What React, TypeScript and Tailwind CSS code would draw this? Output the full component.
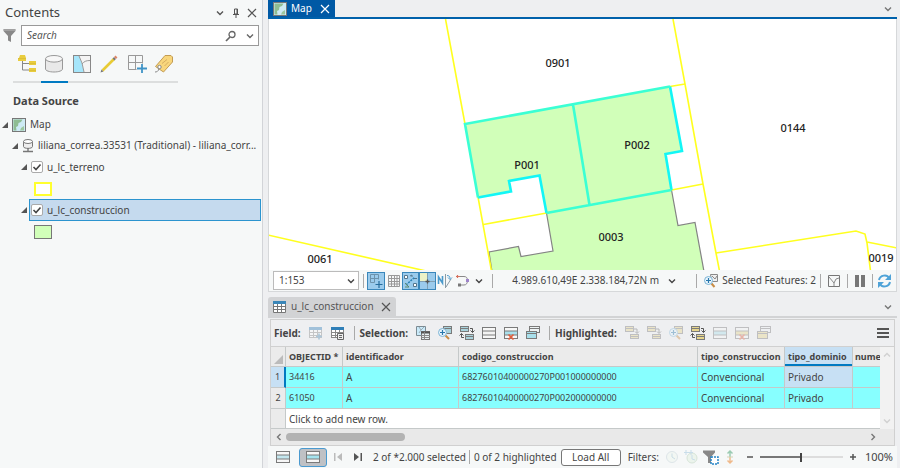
import type { ReactNode } from "react"
import clsx from "clsx"

interface IconProps {
  children: ReactNode
  w?: number
  h?: number
  faded?: boolean
}

function Icon({ children, w = 16, h = 16, faded }: IconProps) {
  return (
    <svg
      width={w}
      height={h}
      viewBox={`0 0 ${w} ${h}`}
      fill="none"
      aria-hidden="true"
      className={clsx("block shrink-0", faded && "opacity-40")}
    >
      {children}
    </svg>
  )
}

function Chevron({ dir = "down" }: { dir?: "down" | "up" | "left" | "right" }) {
  const d = {
    down: "M2 3.500 5 6.500 8 3.500",
    up: "M2 6.500 5 3.500 8 6.500",
    left: "M6.500 2 3.500 5 6.500 8",
    right: "M3.500 2 6.500 5 3.500 8",
  }[dir]
  return (
    <Icon w={10} h={10}>
      <path d={d} stroke="currentColor" strokeWidth="1.400" />
    </Icon>
  )
}

function Close() {
  return (
    <Icon w={10} h={10}>
      <path d="m1 1 8 8M9 1 1 9" stroke="currentColor" strokeWidth="1.200" />
    </Icon>
  )
}

function Divider() {
  return <span className="block h-[14px] w-px shrink-0 bg-[#a9a9a9]" />
}

// little table of rows used by most of the attribute table buttons
function Rows({ x, y, w = 10, h = 7, fill = "#a9d3dc" }: { x: number; y: number; w?: number; h?: number; fill?: string }) {
  return (
    <g>
      <rect x={x + 0.5} y={y + 0.5} width={w - 1} height={h - 1} fill={fill} stroke="#7a7a7a" />
      <path d={`M${x} ${y + 2.5}h${w}`} stroke="#7a7a7a" />
    </g>
  )
}

function FieldIcon({ op, faded }: { op: "add" | "calc"; faded?: boolean }) {
  return (
    <Icon faded={faded}>
      <rect x="1.500" y="2.500" width="12" height="10" fill="#fff" stroke="#888" />
      <rect x="1" y="2" width="13" height="3" fill="#2f7fb8" />
      <path d="M1 7.500h13M1 10.500h13M5.500 5v8M9.500 5v8" stroke="#888" />
      {op === "add" ? (
        <path d="M8 11.500h6M11 8.500v6" stroke="#4a8bb5" strokeWidth="1.600" />
      ) : (
        <path d="M7.500 8.500h6v6h-6zM9 10.500h3M9 12.500h3" fill="#eee" stroke="#666" />
      )}
    </Icon>
  )
}

function ByAttributes() {
  return (
    <Icon>
      <path d="M1.500 1.500h9v5h-4v4h-5z" fill="#c9eafa" stroke="#7c8b93" />
      <path d="m4 2 2 3-2 3M6 5l3-3" stroke="#9aabb3" />
      <rect x="6.500" y="6.500" width="8" height="8" fill="#e8f0f2" stroke="#777" />
      <path d="M6 7.500h9" stroke="#555" strokeWidth="2" />
      <path d="M6 10.500h9M6 12.500h9M9.500 7v8" stroke="#888" />
    </Icon>
  )
}

function ZoomRows({ faded, fill }: { faded?: boolean; fill?: string }) {
  return (
    <Icon faded={faded}>
      <Rows x={6} y={1} w={9} h={8} fill={fill} />
      <path d="m8.500 10.500 3.500 3.500" stroke="#c98d45" strokeWidth="2" />
      <circle cx="5.500" cy="7.500" r="4" fill="#e9f5fc" stroke="#7cb4d6" />
      <path d="M3 7.500h5M5.500 5v5" stroke="#2878ad" strokeWidth="1.200" />
    </Icon>
  )
}

function SwitchRows({ faded, fill }: { faded?: boolean; fill?: string }) {
  return (
    <Icon faded={faded}>
      <Rows x={1} y={1} w={9} h={6} fill={fill} />
      <Rows x={6} y={9} w={9} h={6} fill={fill} />
      <path d="M11 3.500h2.500v4M11.500 5.500l2 2 2-2M5 12.500H2.500v-4M.5 10.500l2-2 2 2" stroke="#555" />
    </Icon>
  )
}

function MoveRows({ fill }: { fill?: string }) {
  return (
    <Icon faded>
      <Rows x={1} y={1} w={9} h={6} fill={fill} />
      <Rows x={6} y={9} w={9} h={5} fill={fill} />
      <path d="M10 4h3v4M11 6.500l2 2 2-2" stroke="#666" />
    </Icon>
  )
}

function ListRows({ faded, clear, fill = "#f3f3f3" }: { faded?: boolean; clear?: boolean; fill?: string }) {
  return (
    <Icon faded={faded}>
      <rect x="1.500" y="2.500" width="13" height="11" fill="#f7f7f7" stroke="#7a7a7a" />
      <path d="M2 6h12v4H2z" fill={fill} />
      <path d="M1 6h14M1 10h14" stroke="#7a7a7a" />
      {clear && <path d="m5.500 9.500 5 5M10.500 9.500l-5 5" stroke="#e0603f" strokeWidth="1.600" />}
    </Icon>
  )
}

function StackRows({ faded, fill = "#a9e0ec" }: { faded?: boolean; fill?: string }) {
  return (
    <Icon faded={faded}>
      <Rows x={4} y={1} w={11} h={7} fill="#eef3f4" />
      <Rows x={1} y={6} w={11} h={8} fill={fill} />
    </Icon>
  )
}

function MapIcon() {
  return (
    <Icon w={14} h={14}>
      <rect x=".5" y=".5" width="13" height="13" fill="#cdeaf4" stroke="#777" />
      <path d="M1.500 1.500h9L9 4 6.500 5 6 8l-2 1 .5 3.500h-3z" fill="#8fbd92" />
      <path d="m9 10 3-2v4.500H8z" fill="#9cc79f" />
    </Icon>
  )
}

const contentTabs: { name: string; icon: ReactNode }[] = [
  {
    name: "List By Drawing Order",
    icon: (
      <Icon w={20} h={20}>
        <path d="M5.500 6v10H13M5.500 9.500H13" stroke="#888" />
        <path d="M3 1h5l1 3v3H1V4h1zM12 7h7v4h-7zM12 14h7v4h-7z" fill="#e9cd3f" />
        <path d="M1 4.500h8M12 9.500h7M12 16.500h7" stroke="#dcc038" />
      </Icon>
    ),
  },
  {
    name: "List By Data Source",
    icon: (
      <Icon w={20} h={20}>
        <path d="M1.500 5v10c0 1.700 3.800 3 8.500 3s8.500-1.300 8.500-3V5" fill="#e9e9e9" stroke="#999" />
        <ellipse cx="10" cy="4.800" rx="8.500" ry="3.300" fill="#f7f7f7" stroke="#999" />
      </Icon>
    ),
  },
  {
    name: "List By Selection",
    icon: (
      <Icon w={20} h={20}>
        <rect x="1.500" y="1.500" width="17" height="17" fill="#f4f4f4" stroke="#888" />
        <path d="M2 2h5l3 8 2 8H2z" fill="#a6e6fb" />
        <path d="m7 2 3 7 2 9M18 6.500c-4 0-6 1-8 3.500" stroke="#999" />
      </Icon>
    ),
  },
  {
    name: "List By Editing",
    icon: (
      <Icon w={20} h={20}>
        <path d="M3.500 16.500 15 5" stroke="#e8cb35" strokeWidth="2.600" />
        <path d="m14.500 5.500 1.500-1.500" stroke="#777" strokeWidth="2.600" />
        <path d="m16 4 1.500-1.500" stroke="#dd8568" strokeWidth="2.600" />
        <path d="m1.500 18.500 1-3 2 2z" fill="#777" />
      </Icon>
    ),
  },
  {
    name: "List By Snapping",
    icon: (
      <Icon w={20} h={20}>
        <path d="M1.500 1.500h14v8M1.500 1.500v14h8M8.500 1.500v14M1.500 8.500h14" stroke="#999" />
        <path d="M15 10v9M10 14.500h10" stroke="#3f93c6" strokeWidth="1.800" />
      </Icon>
    ),
  },
  {
    name: "List By Labeling",
    icon: (
      <Icon w={20} h={20}>
        <path d="M11 1.500h6L18.500 3v5l-9 10-8-5.500z" fill="#f8d67c" stroke="#c39c55" />
        <circle cx="5.500" cy="13" r="1.700" fill="#fff" stroke="#888" />
        <path d="m8 9.500 5-4M10.500 12l4-4" stroke="#d6ae62" />
        <path d="M5 14.500c-.5 3-2.500 3.500-4 3.500" stroke="#888" />
      </Icon>
    ),
  },
]

function Twisty() {
  return (
    <button aria-label="Collapse" className="shrink-0 text-[#555]">
      <svg width="6" height="6" viewBox="0 0 6 6" className="block">
        <path d="M6 0v6H0z" fill="currentColor" />
      </svg>
    </button>
  )
}

function LayerCheck({ name }: { name: string }) {
  return (
    <label className="flex flex-1 items-center gap-1">
      <span className="grid">
        <input
          type="checkbox"
          defaultChecked
          className="peer col-start-1 row-start-1 h-3 w-3 appearance-none rounded-[2px] border border-[#aaa] bg-white"
        />
        <svg
          viewBox="0 0 12 12"
          className="pointer-events-none invisible col-start-1 row-start-1 h-3 w-3 peer-checked:visible"
        >
          <path d="m2.500 6 2.500 2.500L9.500 3.500" fill="none" stroke="#444" strokeWidth="1.600" />
        </svg>
      </span>
      {name}
    </label>
  )
}

function Contents() {
  return (
    <aside className="w-[263px] shrink-0 border-r border-[#d2d4d8] bg-[#f6f8f8]">
      <header className="flex h-[25px] items-center pr-[5px] pl-[5px] text-[#555]">
        <h1 className="flex-1 text-[13px] text-[#444]">Contents</h1>
        <div className="flex items-center gap-[6px]">
          <button aria-label="Options"><Chevron /></button>
          <button aria-label="Auto hide">
            <Icon w={10} h={10}>
              <path d="M3.500 1h3v5h-3zM6 1v5M2 6.500h6M5 6.500V10" stroke="currentColor" />
            </Icon>
          </button>
          <button aria-label="Close"><Close /></button>
        </div>
      </header>

      <div className="flex items-center gap-[5px] pr-[3px] pl-[3px]">
        <Icon w={13} h={15}>
          <path d="M.5 1h12v2L8 8v6l-3-1.500V8L.5 3z" fill="#888" />
          <path d="M1 2h11" stroke="#bbb" />
        </Icon>
        <div className="flex h-[21px] flex-1 items-center border border-[#999] bg-white pr-[3px] pl-[5px] text-[#666]">
          <input
            type="text"
            placeholder="Search"
            aria-label="Search"
            className="min-w-0 flex-1 bg-transparent text-[10px] italic outline-none placeholder:text-[#555]"
          />
          <button aria-label="Find" className="mr-2">
            <Icon w={12} h={12}>
              <circle cx="7" cy="4.500" r="3" stroke="currentColor" strokeWidth="1.300" />
              <path d="m5 7-4 4" stroke="currentColor" strokeWidth="1.700" />
            </Icon>
          </button>
          <button aria-label="Search options"><Chevron /></button>
        </div>
      </div>

      <nav className="mt-2 ml-[13px] flex w-[165px]">
        {contentTabs.map((tab, i) => (
          <button
            key={tab.name}
            aria-label={tab.name}
            className={clsx(
              "flex h-[29px] flex-1 items-start justify-center border-b-2",
              i === 1 ? "border-[#007ac2]" : "border-[#dcdede]",
            )}
          >
            {tab.icon}
          </button>
        ))}
      </nav>

      <h2 className="mt-2 ml-[13px] h-[23px] text-[11px] leading-5 font-bold text-[#444]">Data Source</h2>

      <ul className="text-[10px] text-[#444]">
        <li className="flex h-[21px] items-center gap-1 pl-[2px]">
          <Twisty />
          <MapIcon />
          <span>Map</span>
        </li>
        <li className="flex h-[21px] items-center gap-1 pl-3">
          <Twisty />
          <Icon w={12} h={14}>
            <path d="M1.500 2.500v5c0 2.500 9 2.500 9 0v-5" fill="#eee" stroke="#777" />
            <ellipse cx="6" cy="2.500" rx="4.500" ry="2" fill="#fff" stroke="#777" />
            <path d="M6 9v3M1 12.500h10" stroke="#777" strokeWidth="1.400" />
          </Icon>
          <span className="whitespace-nowrap">liliana_correa.33531 (Traditional) - liliana_corr...</span>
        </li>
        <li className="flex h-[22px] items-center gap-1 pl-[21px]">
          <Twisty />
          <LayerCheck name="u_lc_terreno" />
        </li>
        <li className="flex h-[21px] items-center pl-[34px]">
          <span className="h-[14px] w-[18px] border-2 border-[#ffff2e] bg-white" />
        </li>
        <li className="flex h-[22px] items-center pr-px pl-[21px]">
          <Twisty />
          <div className="ml-[2px] flex h-full flex-1 items-center border border-[#2b94cf] bg-[#c5daee] pl-px">
            <LayerCheck name="u_lc_construccion" />
          </div>
        </li>
        <li className="flex h-[22px] items-center pl-[34px]">
          <span className="h-[14px] w-[18px] border border-[#777] bg-[#d1ffb9]" />
        </li>
      </ul>
    </aside>
  )
}

const parcels = [
  { code: "0901", x: 558, y: 67 },
  { code: "P001", x: 527, y: 169 },
  { code: "P002", x: 637, y: 149 },
  { code: "0144", x: 793, y: 132 },
  { code: "0003", x: 611, y: 241 },
  { code: "0061", x: 320, y: 263 },
  { code: "0019", x: 881, y: 262 },
]

function MapView() {
  return (
    <svg
      viewBox="269 19 627 251"
      preserveAspectRatio="xMidYMid slice"
      className="min-h-[160px] w-full flex-1 border-x border-[#d6d8da] bg-white"
      role="img"
      aria-label="Parcel map"
    >
      <path
        d="M546.500 213 671.500 190l6.500 35.500 17-3 9 49H492l-3-19.500 29.500-5.500 2.500 10 32-5.500z"
        fill="#d1ffb9"
        stroke="#848484"
        strokeWidth="1.200"
      />
      <path d="m465 124 205-37.500 12 64.500-16.500 3 6 36-125 23-7-37.500-30.500 5.500 2 10.500-33 6z" fill="#d1ffb9" />
      <g fill="none" stroke="#ffff1f" strokeWidth="1.600">
        <path d="M445.500 19 465 124M478 197l13.500 74M483.500 224.500l63-11.500" />
        <path d="M673 19 685 84l18 100 13 69 3.500 18M670 86.500l15-2.500M671.500 190l31.500-6" />
        <path d="m716 253 140-22 9 3 2 9 3.500 28M867 242l30 6M268 235l158 36" />
      </g>
      <g fill="none" strokeWidth="2.600">
        <path d="m478 197.500 33-6-2-10.500 30.500-5.500 7 37.500M670 86.500l12 64.500-16.500 3 6 36" stroke="#12f6f6" />
        <path d="m478 197.500-13-73.500 205-37.500M573 104.500l16.500 100.500M546.500 213l125-23" stroke="#3bffd4" />
      </g>
      <g fontSize="11" fontWeight="500" fill="#222" textAnchor="middle">
        {parcels.map(p => (
          <text key={p.code} x={p.x} y={p.y}>{p.code}</text>
        ))}
      </g>
    </svg>
  )
}

const active = "border border-[#3a87bb] bg-[#9bcbec]"

function MapStatus() {
  return (
    <div className="flex h-[22px] shrink-0 items-center border-x border-b border-[#d6d8da] bg-[#f6f8f8] pr-1 pl-1 text-[10px] text-[#444]">
      <div className="grid h-[19px] w-[86px] items-center border border-[#bbb] bg-white">
        <select aria-label="Map scale" className="col-start-1 row-start-1 h-full appearance-none bg-transparent pl-[5px]">
          <option>1:153</option>
        </select>
        <span className="pointer-events-none col-start-1 row-start-1 mr-[2px] justify-self-end"><Chevron /></span>
      </div>
      <div className="ml-1 flex items-center">
        <Divider />
        <button aria-label="Snapping" className={clsx("ml-[3px] grid h-[18px] w-[18px] place-items-center", active)}>
          <Icon>
            <path d="M2.500 1.500h8v5M2.500 1.500v8h4M6.500 1.500v8M2.500 5.500h8" stroke="#6d93ac" />
            <path d="M11 8v7M7.500 11.500h7" stroke="#276d9c" strokeWidth="1.200" />
          </Icon>
        </button>
        <button aria-label="Grid" className="grid h-[18px] w-[17px] place-items-center">
          <Icon w={12} h={12}>
            <path d="M.5.5h11v11H.5zM.5 3.500h11M.5 6.500h11M.5 9h11M3.500 0v12M6.500 0v12M9 0v12" stroke="#999" />
          </Icon>
        </button>
        <button aria-label="Infer constraints" className={clsx("grid h-[18px] w-[17px] place-items-center", active)}>
          <Icon w={15}>
            <path d="M1.500 2.500h3v3h-3zM10.500 10.500h3v3h-3z" fill="#fff" stroke="#55768c" />
            <path d="m7 3 2-1M11 5.500h3M9 2v2" stroke="#55768c" />
            <path d="m3 12 9-8" stroke="#2b80b4" strokeDasharray="2 1" strokeWidth="1.500" />
            <path d="m2 10 4 4M2 14h4" stroke="#5f8b6d" />
          </Icon>
        </button>
        <button aria-label="Dynamic constraints" className={clsx("grid h-[18px] w-[17px] place-items-center", active)}>
          <Icon w={15}>
            <path d="M0 0h7v8H0z" fill="#edf2c7" />
            <path d="M7.500 0v16M0 8.500h15" stroke="#7f9fb3" />
            <path d="M7.500 6.500v4M5.500 8.500h4" stroke="#555" strokeWidth="1.300" />
          </Icon>
        </button>
        <button aria-label="Correct to ground" className="ml-px">
          <Icon>
            <path d="M1.500 11V4l4 6V3" stroke="#4b9acb" strokeWidth="1.600" />
            <path d="M8.500 1v14M9 14l5-8" stroke="#8a9ba5" />
            <path d="M10 2.500c2 0 3 1 3 3M11 4.500l2 2 2-2" stroke="#4b9acb" />
          </Icon>
        </button>
        <button aria-label="Dynamic display" className="ml-[2px]">
          <Icon>
            <path d="M2 3.500h7c2.500 0 3.500 1.500 3.500 4s-1 4.500-3.500 4.500H4" stroke="#888" />
            <path d="M1 3.500h4M2.500 2v3" stroke="#d4705c" strokeWidth="1.200" />
            <path d="M11 6h3v3h-3z" fill="#9d83c9" />
            <path d="M3 10.500h3v3H3z" fill="#777" />
          </Icon>
        </button>
        <button aria-label="More tools" className="mx-[3px]"><Chevron /></button>
      </div>
      <span className="ml-[5px]"><Divider /></span>
      <div className="flex flex-1 items-center justify-center gap-2 whitespace-nowrap">
        4.989.610,49E 2.338.184,72N m
        <button aria-label="Coordinate format"><Chevron /></button>
      </div>
      <Divider />
      <button className="ml-[6px] flex items-center gap-[3px] whitespace-nowrap">
        <Icon>
          <path d="M7.500 1.500h7v7h-6z" fill="#eee" stroke="#888" />
          <path d="m9 3 3 3 2-3" stroke="#888" />
          <path d="m8.500 10.500 3 3.500" stroke="#c98d45" strokeWidth="2" />
          <circle cx="5.500" cy="7.500" r="4" fill="#e9f5fc" stroke="#7cb4d6" />
          <path d="M3 7.500h5M5.500 5v5" stroke="#2878ad" strokeWidth="1.200" />
        </Icon>
        Selected Features: 2
      </button>
      <span className="mr-[7px] ml-1"><Divider /></span>
      <button aria-label="Sketch">
        <Icon w={12} h={12}>
          <path d="M.5.5h11v11H.5z" stroke="#777" />
          <path d="m1 2 5 6 2-4 3-1M6 8v3" stroke="#888" />
        </Icon>
      </button>
      <span className="mx-[7px]"><Divider /></span>
      <button aria-label="Pause drawing">
        <Icon w={10} h={12}>
          <path d="M0 0h4v12H0zM6 0h4v12H6z" fill="#777" />
        </Icon>
      </button>
      <span className="ml-[7px]"><Divider /></span>
      <button aria-label="Refresh" className="ml-1">
        <Icon w={15}>
          <path d="M2 7c1-5 8-6 10-2M13 9c-1 5-8 6-10 2" stroke="#4fa3d8" strokeWidth="2" />
          <path d="M14 1v6H8zM1 15V9h6z" fill="#4fa3d8" />
        </Icon>
      </button>
    </div>
  )
}

const highlightFill = "#e6d58c"

function TableTools() {
  const tool = "grid h-5 w-[22px] shrink-0 place-items-center"
  return (
    <div className="flex h-[27px] items-center border-b border-[#d0d0d0] pr-[5px] pl-[3px] text-[10px] font-bold text-[#444]">
      Field:
      <div className="ml-1 flex">
        <button aria-label="Add field" className={tool}><FieldIcon op="add" faded /></button>
        <button aria-label="Calculate field" className={tool}><FieldIcon op="calc" /></button>
      </div>
      <span className="mx-[5px]"><Divider /></span>
      Selection:
      <div className="ml-1 flex">
        <button aria-label="Select by attributes" className={tool}><ByAttributes /></button>
        <button aria-label="Zoom to selection" className={tool}><ZoomRows /></button>
        <button aria-label="Switch selection" className={tool}><SwitchRows /></button>
        <button aria-label="Select all" className={tool}><ListRows /></button>
        <button aria-label="Clear selection" className={tool}><ListRows clear fill="#a9e0ec" /></button>
        <button aria-label="Copy selection" className={tool}><StackRows /></button>
      </div>
      <span className="mx-[5px]"><Divider /></span>
      Highlighted:
      <div className="ml-1 flex">
        <button aria-label="Reselect highlighted" className={tool}><MoveRows fill={highlightFill} /></button>
        <button aria-label="Unselect highlighted" className={tool}><MoveRows fill={highlightFill} /></button>
        <button aria-label="Zoom to highlighted" className={tool}><ZoomRows faded fill={highlightFill} /></button>
        <button aria-label="Switch highlighted" className={tool}><SwitchRows fill={highlightFill} /></button>
        <button aria-label="Highlight all" className={tool}><ListRows faded fill="#a9e0ec" /></button>
        <button aria-label="Clear highlighted" className={tool}><ListRows faded clear fill={highlightFill} /></button>
        <button aria-label="Copy highlighted" className={tool}><StackRows faded fill={highlightFill} /></button>
      </div>
      <button aria-label="Menu" className="ml-auto">
        <Icon w={12} h={12}>
          <path d="M0 2h12M0 6h12M0 10h12" stroke="#555" strokeWidth="2" />
        </Icon>
      </button>
    </div>
  )
}

const records = [
  { id: "34416", ident: "A", code: "68276010400000270P001000000000", type: "Convencional", domain: "Privado" },
  { id: "61050", ident: "A", code: "68276010400000270P002000000000", type: "Convencional", domain: "Privado" },
]

function AttributeTable() {
  const cell = "border-r border-b border-[#c5c9c9] px-[3px] text-left"
  return (
    <div className="flex bg-white">
      <div className="min-w-0 flex-1 overflow-hidden">
        <table className="w-full table-fixed border-separate border-spacing-0 text-[10px] leading-4 whitespace-nowrap text-[#444]">
          <colgroup>
            <col className="w-[15px]" />
            <col className="w-[57px]" />
            <col className="w-[116px]" />
            <col />
            <col className="w-[87px]" />
            <col className="w-[68px]" />
            <col className="w-[27px]" />
          </colgroup>
          <thead className="bg-[#ebebeb] text-[9px]">
            <tr className="h-5">
              <th aria-label="Row" className="border-r border-b border-[#c5c9c9] pt-[6px] pl-[3px]">
                <Icon w={9} h={9}><path d="M9 0v9H0z" fill="#bbb" /></Icon>
              </th>
              <th className={cell}>OBJECTID *</th>
              <th className={cell}>identificador</th>
              <th className={cell}>codigo_construccion</th>
              <th className={cell}>tipo_construccion</th>
              <th className={clsx(cell, "bg-[#c7e0f4] shadow-[inset_0_-2px_#007ac2]")}>tipo_dominio</th>
              <th className="border-b border-[#c5c9c9] pl-[2px] text-left">nume</th>
            </tr>
          </thead>
          <tbody>
            {records.map((r, i) => (
              <tr key={r.id} className="h-[21px] bg-[#87ffff]">
                <td
                  className={clsx(
                    "border-b border-b-[#c5c9c9] text-center text-[9px]",
                    i === 0 ? "border-r-2 border-r-[#0079c1] bg-[#c7e0f4]" : "border-r border-r-[#c5c9c9] bg-[#ebebeb]",
                  )}
                >
                  {i + 1}
                </td>
                <td className={clsx(cell, "text-[9px]")}>{r.id}</td>
                <td className={cell}>{r.ident}</td>
                <td className={clsx(cell, "text-[9px]")}>{r.code}</td>
                <td className={cell}>{r.type}</td>
                <td className={clsx(cell, i === 0 && "bg-[#c7e0f4]")}>{r.domain}</td>
                <td className="border-b border-[#c5c9c9]" />
              </tr>
            ))}
            <tr className="h-5">
              <td className="border-r border-b border-[#c5c9c9] bg-[#ebebeb]" />
              <td colSpan={6} className="border-b border-[#c5c9c9] px-[3px]">Click to add new row.</td>
            </tr>
          </tbody>
        </table>
      </div>
      <div className="flex w-[14px] flex-col items-center justify-between bg-[#f2f2f2] py-[3px] text-[#d0d0d0]">
        <Chevron dir="up" />
        <Chevron />
      </div>
    </div>
  )
}

function TableFooter() {
  return (
    <footer className="flex h-[22px] shrink-0 items-center bg-[#f6f8f8] pr-1 pl-[7px] text-[10px] whitespace-nowrap text-[#444]">
      <button aria-label="Show all records"><ListRows fill="#c3e6ee" /></button>
      <button
        aria-label="Show selected records"
        className="ml-2 grid h-[19px] w-7 place-items-center rounded-[3px] border border-[#4a9ad0] bg-[#bfc1c5]"
      >
        <ListRows fill="#a5e3ee" />
      </button>
      <button aria-label="First record" className="ml-[7px]">
        <Icon w={8} h={8}><path d="M0 0h1.500v8H0zM8 0v8L3 4z" fill="#bbb" /></Icon>
      </button>
      <button aria-label="Last record" className="ml-3">
        <Icon w={8} h={8}><path d="M0 0v8l5-4zM6.500 0H8v8H6.500z" fill="#555" /></Icon>
      </button>
      <span className="ml-[11px]">2 of *2.000 selected</span>
      <span className="mr-1 ml-[3px]"><Divider /></span>
      <span>0 of 2 highlighted</span>
      <button className="ml-1 h-[17px] w-[60px] rounded-[3px] border border-[#777] bg-white leading-none">Load All</button>
      <span className="ml-[7px]">Filters:</span>
      <div className="ml-[5px] flex items-center gap-[3px]">
        <button aria-label="Filter by time" disabled>
          <Icon faded>
            <circle cx="8" cy="8" r="5.500" fill="#eef6ee" stroke="#b9c9d2" />
            <path d="M8 4.500V8l3 2" stroke="#8bb7c9" />
          </Icon>
        </button>
        <button aria-label="Filter by range" disabled>
          <Icon faded>
            <circle cx="9" cy="9" r="5" fill="#dff0dc" stroke="#a9c7a9" />
            <path d="M1 3.500h9M3 1v5M8 1v5M9 6v4l3 1" stroke="#88b5d5" />
          </Icon>
        </button>
        <button aria-label="Filter by extent">
          <Icon w={17}>
            <path d="M1 1.500h12v2L9 8v6H6V8L1 3.500z" fill="#888" />
            <rect x="9" y="8" width="7" height="7" fill="#fff" stroke="#2584c6" strokeWidth="1.500" strokeDasharray="2 1" />
          </Icon>
        </button>
        <button aria-label="Filter by elevation" disabled>
          <Icon>
            <path d="M8 2v6M5.500 4.500 8 2l2.500 2.500" stroke="#9bcbb2" strokeWidth="1.500" />
            <path d="M8 8v6M5.500 11.500 8 14l2.500-2.500" stroke="#efb98a" strokeWidth="1.500" />
            <path d="M5 8h6" stroke="#d3d3b5" />
          </Icon>
        </button>
      </div>
      <button aria-label="Zoom out" className="ml-2">
        <Icon w={8} h={8}><path d="M1 4h6" stroke="#555" strokeWidth="1.500" /></Icon>
      </button>
      <input
        type="range"
        aria-label="Table zoom"
        defaultValue={50}
        className="mx-[6px] h-[9px] w-0 min-w-[60px] flex-1 appearance-none bg-[linear-gradient(90deg,#777_50%,#ddd_50%)] bg-[length:100%_2px] bg-center bg-no-repeat [&::-webkit-slider-thumb]:h-[9px] [&::-webkit-slider-thumb]:w-[2px] [&::-webkit-slider-thumb]:appearance-none [&::-webkit-slider-thumb]:bg-[#444]"
      />
      <button aria-label="Zoom in">
        <Icon w={8} h={8}><path d="M1 4h6M4 1v6" stroke="#555" strokeWidth="1.500" /></Icon>
      </button>
      <span className="ml-2 text-[11px]">100%</span>
    </footer>
  )
}

export default function App() {
  return (
    <div className="flex min-h-screen bg-[#eeeff1] font-['Noto_Sans','Open_Sans',sans-serif]">
      <Contents />

      <main className="flex min-w-0 flex-1 flex-col pr-[3px] pl-[5px]">
        <div className="flex h-[19px] shrink-0 items-start justify-between border-b-2 border-[#0061ab]">
          <div className="flex h-[17px] items-center gap-1 bg-[#0059a5] px-[5px] text-[10px] text-white">
            <MapIcon />
            <span>Map</span>
            <button aria-label="Close map" className="ml-1"><Close /></button>
          </div>
          <button aria-label="Views" className="mt-1 mr-1 text-[#777]"><Chevron /></button>
        </div>
        <MapView />
        <MapStatus />

        <section className="mt-[5px] shrink-0">
          <div className="flex h-[21px] items-center justify-between border-b-2 border-[#d2d3d5]">
            <div className="flex h-5 items-center gap-[5px] rounded-t-[3px] bg-[#d2d3d5] px-[5px] text-[10px] text-[#555]">
              <Icon w={13} h={12}>
                <path d="M.5.5h12v11H.5zM0 5.500h13M0 8.500h13M4.500 3v9M8.500 3v9" fill="#fff" stroke="#777" />
                <path d="M0 1.500h13" stroke="#3a86b8" strokeWidth="3" />
              </Icon>
              <span>u_lc_construccion</span>
              <button aria-label="Close table" className="ml-[2px]"><Close /></button>
            </div>
            <button aria-label="Tables" className="mr-1 text-[#777]"><Chevron /></button>
          </div>
          <div className="mt-px mr-[2px] ml-[2px] border border-[#d0d0d0]">
            <TableTools />
            <AttributeTable />
            <div className="flex h-4 items-center bg-[#e9e9e9] pr-4 pl-[3px] text-[#777]">
              <Chevron dir="left" />
              <span className="ml-[2px] h-2 w-[119px] rounded-full bg-[#b3b3b3]" />
              <span className="ml-auto"><Chevron dir="right" /></span>
            </div>
          </div>
          <TableFooter />
        </section>
      </main>
    </div>
  )
}
